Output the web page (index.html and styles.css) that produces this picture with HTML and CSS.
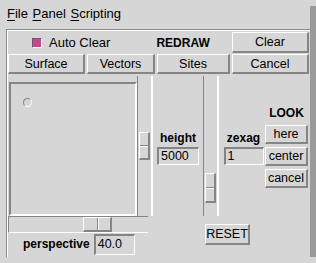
FILE: index.html
```html
<!DOCTYPE html>
<html lang="en">
<head>
  <meta charset="UTF-8" />
  <title>Panel</title>
  <link rel="stylesheet" href="styles.css">
</head>
<body>
  <div class="window">
    <div class="menubar">
      <span class="menu"><u>F</u>ile</span>
      <span class="menu"><u>P</u>anel</span>
      <span class="menu"><u>S</u>cripting</span>
    </div>

    <div class="frame">
      <div class="row-top">
        <span class="check"></span>
        <span class="check-label">Auto Clear</span>
        <span class="label redraw">REDRAW</span>
        <button class="btn clear">Clear</button>
      </div>

      <div class="row-tabs">
        <button class="btn tab-surface">Surface</button>
        <button class="btn tab-vectors">Vectors</button>
        <button class="btn tab-sites">Sites</button>
        <button class="btn tab-cancel">Cancel</button>
      </div>

      <div class="work">
        <div class="canvas">
          <span class="site"></span>
        </div>

        <div class="vscroll vscroll-1">
          <div class="thumb-v"></div>
        </div>

        <div class="field height-field">
          <span class="label">height</span>
          <div class="input">5000</div>
        </div>

        <div class="vscroll vscroll-2">
          <div class="thumb-v"></div>
        </div>

        <div class="field zexag-field">
          <span class="label">zexag</span>
          <div class="input">1</div>
        </div>

        <div class="look">
          <span class="label">LOOK</span>
          <button class="btn small">here</button>
          <button class="btn small">center</button>
          <button class="btn small">cancel</button>
        </div>

        <div class="hscroll">
          <div class="thumb-h"></div>
        </div>

        <div class="persp">
          <span class="label">perspective</span>
          <div class="input persp-input">40.0</div>
        </div>

        <div class="reset-cell">
          <button class="btn reset">RESET</button>
        </div>
      </div>
    </div>
  </div>
</body>
</html>
```

FILE: styles.css
```css
body {
  margin: 0;
  font-family: 'Liberation Sans', Arial, sans-serif;
  color: #000;
  background-color: #d6d6d6;
}
.window {
  width: 310px;
  height: 257px;
  background-color: #d6d6d6;
  box-shadow: 6px 6px 0 #9a9a9a;
}
.menubar {
  height: 29px;
  box-sizing: border-box;
  padding: 6px 0 0 7px;
  font-size: 13px;
  line-height: 16px;
  white-space: nowrap;
}
.menu {
  margin-right: 1px;
}
.menu u {
  text-underline-offset: 2px;
}
.frame {
  margin-left: 6px;
  height: 228px;
  box-sizing: border-box;
  padding: 1px 0 0 1px;
  border-top: 1px solid #8a8a8a;
  border-left: 1px solid #8a8a8a;
  box-shadow: inset 1px 1px 0 #fff;
}

/* bevels */
.btn {
  font-family: inherit;
  font-size: 12.5px;
  color: #000;
  background-color: #d6d6d6;
  border-style: solid;
  border-width: 1px 2px 2px 1px;
  border-color: #fff #858585 #858585 #fff;
  padding: 0;
  margin: 0;
  box-sizing: border-box;
  line-height: 14px;
  white-space: nowrap;
}
.label {
  font-size: 12px;
  font-weight: bold;
  line-height: 14px;
  white-space: nowrap;
}
.input {
  box-sizing: border-box;
  height: 18px;
  border-style: solid;
  border-width: 2px 1px 1px 2px;
  border-color: #858585 #fff #fff #858585;
  font-size: 12.5px;
  line-height: 14px;
  padding-left: 2px;
}

/* first row */
.row-top {
  display: flex;
  align-items: center;
  height: 21px;
  margin-top: 1px;
}
.check {
  flex: none;
  width: 8px;
  height: 8px;
  margin-left: 24px;
  background-color: #c4478a;
  border-top: 1px solid #7a5070;
  border-left: 1px solid #7a5070;
  border-right: 1px solid #fff;
  border-bottom: 1px solid #fff;
}
.check-label {
  font-size: 13px;
  margin-left: 7px;
  white-space: nowrap;
}
.redraw {
  margin-left: 46px;
}
.clear {
  flex: none;
  width: 77px;
  height: 21px;
  margin-left: auto;
  margin-right: 1px;
}

/* second row */
.row-tabs {
  display: flex;
  height: 20px;
  margin-top: 1px;
  gap: 2px;
}
.row-tabs .btn {
  height: 20px;
}
.tab-surface { width: 77px; }
.tab-vectors { width: 68px; }
.tab-sites { width: 73px; }
.tab-cancel { width: 77px; }

/* work area */
.work {
  display: grid;
  grid-template-columns: 129px 16px 50px 16px 45px 45px;
  grid-template-rows: 141px 17px 22px;
  margin-top: 1px;
}
.canvas {
  grid-row: 1;
  grid-column: 1;
  position: relative;
  margin: 7px 0 0 1px;
  border-style: solid;
  border-width: 2px;
  border-color: #858585 #fff #fff #858585;
}
.site {
  position: absolute;
  left: 12px;
  top: 14px;
  width: 7px;
  height: 7px;
  border-radius: 50%;
  border: 1px solid;
  border-color: #858585 #fff #fff #858585;
}
.vscroll {
  grid-row: 1;
  margin-top: 1px;
  border-style: solid;
  border-width: 0 2px 0 1px;
  border-color: #858585 #fff #fff #858585;
  display: flex;
  flex-direction: column;
  align-items: center;
}
.vscroll-1 {
  grid-column: 2;
  padding-top: 56px;
}
.vscroll-2 {
  grid-column: 4;
  padding-top: 97px;
}
.thumb-v {
  width: 11px;
  height: 28px;
  box-sizing: border-box;
  border-style: solid;
  border-width: 1px 2px 2px 1px;
  border-color: #fff #858585 #858585 #fff;
  background: linear-gradient(#d6d6d6 12px, #858585 12px, #858585 13px, #fff 13px, #fff 14px, #d6d6d6 14px);
}
.vscroll-2 .thumb-v {
  height: 30px;
  background: linear-gradient(#d6d6d6 13px, #858585 13px, #858585 14px, #fff 14px, #fff 15px, #d6d6d6 15px);
}
.field {
  grid-row: 1;
  display: flex;
  flex-direction: column;
  align-items: center;
  padding-top: 56px;
}
.height-field {
  grid-column: 3;
}
.height-field .input {
  width: 42px;
  margin-top: 2px;
}
.zexag-field {
  grid-column: 5;
  padding-left: 4px;
}
.zexag-field .input {
  width: 40px;
  margin-top: 2px;
}
.look {
  grid-row: 1;
  grid-column: 6;
  display: flex;
  flex-direction: column;
  align-items: center;
  padding-top: 31px;
}
.look .label {
  margin-bottom: 5px;
}
.small {
  width: 43px;
  height: 19px;
  margin-bottom: 3px;
}
.hscroll {
  grid-row: 2;
  grid-column: 1 / span 2;
  margin-right: 5px;
  border-style: solid;
  border-width: 1px 0 1px 1px;
  border-color: #858585 #fff #fff #858585;
  display: flex;
  align-items: center;
  padding-left: 74px;
}
.thumb-h {
  width: 29px;
  height: 15px;
  box-sizing: border-box;
  border-style: solid;
  border-width: 1px 2px 2px 1px;
  border-color: #fff #858585 #858585 #fff;
  background: linear-gradient(90deg, #d6d6d6 13px, #858585 13px, #858585 14px, #fff 14px, #fff 15px, #d6d6d6 15px);
}
.persp {
  grid-row: 3;
  grid-column: 1 / span 2;
  display: flex;
  align-items: center;
  padding-left: 15px;
}
.persp-input {
  width: 41px;
  height: 21px;
  margin-left: 4px;
  padding-top: 1px;
}
.reset-cell {
  grid-row: 2 / span 2;
  grid-column: 4 / span 2;
  padding: 8px 0 0 2px;
}
.reset {
  width: 45px;
  height: 21px;
}
```
